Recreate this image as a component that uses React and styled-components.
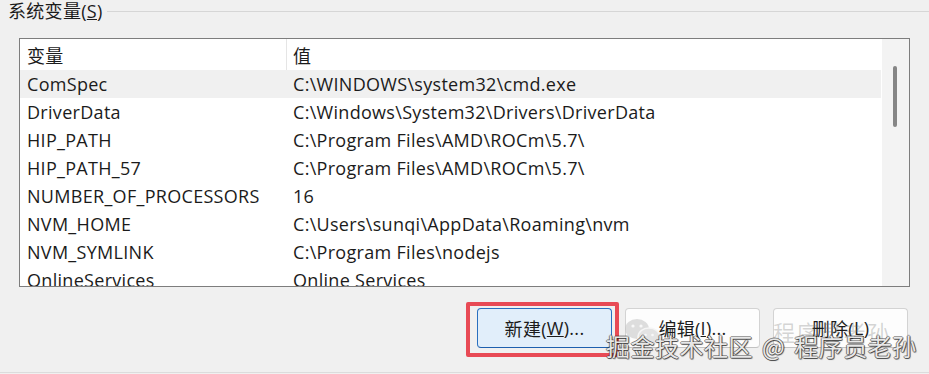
import React from "react";
import styled, { createGlobalStyle } from "styled-components";

const GlobalStyle = createGlobalStyle`
  html, body { margin: 0; padding: 0; background: #f0f0f0; }
  body {
    font-family: "Open Sans", "Noto Sans CJK SC", sans-serif;
    color: #1b1b1b;
  }
  * { box-sizing: border-box; }
`;

const Page = styled.div`
  position: relative;
  width: 929px;
  height: 374px;
  overflow: hidden;
  background: #f0f0f0;
  font-size: 18px;
  letter-spacing: 0.3px;
`;

const Group = styled.section`
  display: flex;
  flex-direction: column;
  height: 373px;
  border-bottom: 1px solid #dcdcdc;
`;

const GroupHeader = styled.div`
  display: flex;
  align-items: center;
  height: 23px;
  padding-left: 8px;
`;

const Legend = styled.span`
  white-space: nowrap;
  line-height: 23px;
`;

const Rule = styled.div`
  flex: 1;
  height: 1px;
  margin-left: 4px;
  background: #d6d6d6;
`;

const ListBox = styled.div`
  display: grid;
  grid-template-columns: 1fr 27px;
  width: 891px;
  height: 249px;
  margin: 15px 0 0 19px;
  border: 1px solid #7d7d7d;
  overflow: hidden;
`;

const ListBody = styled.div`
  background: #ffffff;
  overflow: hidden;
`;

const Line = styled.div`
  display: grid;
  grid-template-columns: 267px 1fr;
  height: ${(p) => (p.$header ? 31 : 28)}px;
  margin-right: 1px;
  background: ${(p) => (p.$selected ? "#f0f0f0" : "#ffffff")};
`;

const Cell = styled.div`
  display: flex;
  align-items: center;
  padding-left: ${(p) => (p.$first ? 7 : 6)}px;
  white-space: nowrap;
  overflow: hidden;
  border-right: ${(p) => (p.$divider ? "1px solid #e5e5e5" : "none")};
`;

const ScrollTrack = styled.div`
  position: relative;
  background: #f3f3f3;
`;

const Thumb = styled.div`
  position: absolute;
  left: 11px;
  top: 27px;
  width: 4px;
  height: 61px;
  border-radius: 2px;
  background: #868686;
`;

const ButtonBar = styled.div`
  display: flex;
  justify-content: flex-end;
  gap: 13px;
  margin-top: 21px;
  padding-right: 21px;
`;

const Highlight = styled.div`
  position: relative;
  &::after {
    content: "";
    position: absolute;
    left: -11px;
    right: -7px;
    top: -6px;
    bottom: -9px;
    border: 4.5px solid #e84a55;
    border-radius: 2px;
    pointer-events: none;
  }
`;

const Button = styled.button`
  width: 135px;
  height: 40px;
  border-radius: 4px;
  font: inherit;
  letter-spacing: inherit;
  color: #1b1b1b;
  padding: 0;
  display: flex;
  align-items: center;
  justify-content: center;
  background: ${(p) => (p.$primary ? "#e1eefa" : "#fdfdfd")};
  border: 1px solid ${(p) => (p.$primary ? "#2a6fbf" : "#d3d3d3")};
  border-bottom-color: ${(p) => (p.$primary ? "#1d5fae" : "#c2c2c2")};
`;

const Watermark = styled.div`
  position: absolute;
  left: 0;
  top: 0;
  width: 100%;
  height: 100%;
  pointer-events: none;
`;

const FaintLogo = styled.svg`
  position: absolute;
  left: 622px;
  top: 316px;
  opacity: 0.55;
`;

const FaintName = styled.span`
  position: absolute;
  left: 773px;
  top: 316px;
  font-family: "Noto Sans CJK SC", sans-serif;
  font-size: 22px;
  line-height: 30px;
  letter-spacing: 1.5px;
  color: rgba(110, 110, 110, 0.28);
`;

const Stamp = styled.div`
  position: absolute;
  left: 606px;
  top: 330px;
  display: flex;
  align-items: center;
  gap: 9px;
  font-family: "Noto Sans CJK SC", sans-serif;
  font-size: 24px;
  line-height: 32px;
  letter-spacing: 0.5px;
  color: rgba(250, 250, 250, 0.92);
  text-shadow: -1px 0 0 rgba(40, 40, 40, 0.55), 1px 0 0 rgba(40, 40, 40, 0.55),
    0 -1px 0 rgba(40, 40, 40, 0.45), 0 1px 0 rgba(40, 40, 40, 0.6),
    1px 1px 1px rgba(0, 0, 0, 0.45);
`;

const rows = [
  ["ComSpec", "C:\\WINDOWS\\system32\\cmd.exe"],
  ["DriverData", "C:\\Windows\\System32\\Drivers\\DriverData"],
  ["HIP_PATH", "C:\\Program Files\\AMD\\ROCm\\5.7\\"],
  ["HIP_PATH_57", "C:\\Program Files\\AMD\\ROCm\\5.7\\"],
  ["NUMBER_OF_PROCESSORS", "16"],
  ["NVM_HOME", "C:\\Users\\sunqi\\AppData\\Roaming\\nvm"],
  ["NVM_SYMLINK", "C:\\Program Files\\nodejs"],
  ["OnlineServices", "Online Services"],
];

export default function App() {
  return (
    <>
      <GlobalStyle />
      <Page>
        <Group>
          <GroupHeader>
            <Legend>
              系统变量(<u>S</u>)
            </Legend>
            <Rule />
          </GroupHeader>
          <ListBox>
            <ListBody>
              <Line $header>
                <Cell $first $divider>变量</Cell>
                <Cell>值</Cell>
              </Line>
              {rows.map(([name, value], i) => (
                <Line key={name} $selected={i === 0}>
                  <Cell $first>{name}</Cell>
                  <Cell>{value}</Cell>
                </Line>
              ))}
            </ListBody>
            <ScrollTrack>
              <Thumb />
            </ScrollTrack>
          </ListBox>
          <ButtonBar>
            <Highlight>
              <Button $primary>
                新建(<u>W</u>)...
              </Button>
            </Highlight>
            <Button>
              编辑(<u>I</u>)...
            </Button>
            <Button>
              删除(<u>L</u>)
            </Button>
          </ButtonBar>
        </Group>
        <Watermark>
          <FaintLogo width="44" height="34" viewBox="0 0 44 34">
            <ellipse cx="15" cy="13" rx="12" ry="10" fill="#c4c4c4" />
            <ellipse cx="27" cy="21" rx="11" ry="9" fill="#cfcfcf" stroke="#f0f0f0" strokeWidth="1.5" />
            <circle cx="11" cy="10" r="1.6" fill="#f4f4f4" />
            <circle cx="19" cy="10" r="1.6" fill="#f4f4f4" />
            <circle cx="23.5" cy="19" r="1.3" fill="#f4f4f4" />
            <circle cx="30.5" cy="19" r="1.3" fill="#f4f4f4" />
          </FaintLogo>
          <FaintName>程序员老孙</FaintName>
          <Stamp>
            <span>掘金技术社区</span>
            <span>@</span>
            <span>程序员老孙</span>
          </Stamp>
        </Watermark>
      </Page>
    </>
  );
}
